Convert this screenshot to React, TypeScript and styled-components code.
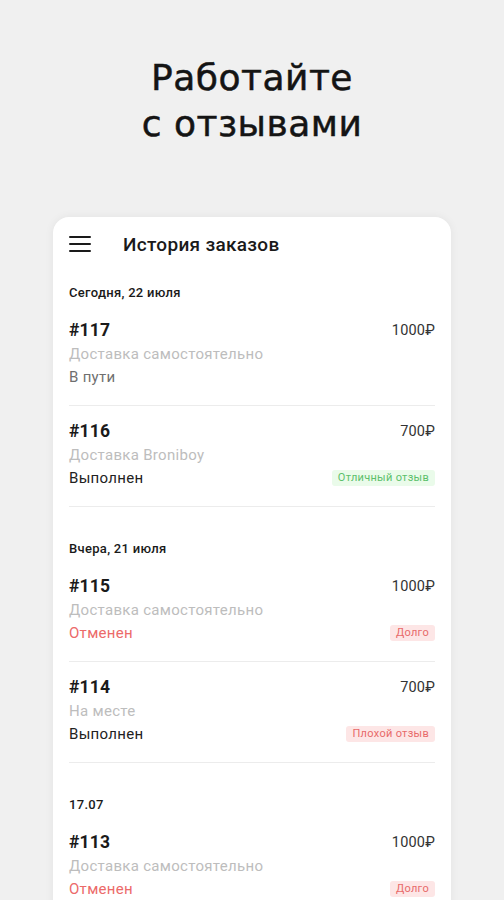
import React from 'react'
import styled, { createGlobalStyle } from 'styled-components'

const GlobalStyle = createGlobalStyle`
  html, body {
    margin: 0;
    padding: 0;
    background: #f0f0f0;
    font-family: Roboto, "Noto Sans", "Liberation Sans", sans-serif;
    color: #1a1a1a;
  }
`

const Page = styled.div`
  width: 504px;
  height: 900px;
  overflow: hidden;
  display: flex;
  flex-direction: column;
  align-items: center;
`

const Headline = styled.h1`
  margin: 55px 0 70px;
  font-family: "DejaVu Sans", "Open Sans", sans-serif;
  font-size: 36px;
  line-height: 46px;
  font-weight: 400;
  letter-spacing: 0.5px;
  -webkit-text-stroke: 0.5px #141414;
  text-align: center;
  color: #141414;
`

const Card = styled.div`
  width: 398px;
  flex: 1;
  background: #fff;
  border-radius: 16px 16px 0 0;
  box-shadow: 0 0 10px rgba(0, 0, 0, 0.06);
  padding: 0 16px;
  box-sizing: border-box;
`

const Header = styled.div`
  height: 54px;
  display: flex;
  align-items: center;
  gap: 32px;
`

const Burger = styled.div`
  width: 22px;
  display: flex;
  flex-direction: column;
  gap: 5px;
  span {
    display: block;
    height: 2px;
    background: #1a1a1a;
    border-radius: 1px;
  }
`

const Title = styled.div`
  font-size: 19px;
  font-weight: 500;
  letter-spacing: 0.3px;
  color: #1a1a1a;
`

const Section = styled.section`
  padding-top: 14px;
  & + & {
    padding-top: 34px;
  }
`

const DateLabel = styled.div`
  font-size: 13px;
  line-height: 16px;
  font-weight: 500;
  letter-spacing: 0.3px;
  color: #1a1a1a;
  margin-bottom: 17px;
`

const Order = styled.div`
  padding-bottom: 17px;
  border-bottom: 1px solid #ececec;
  & + & {
    padding-top: 13px;
  }
`

const Row = styled.div`
  display: flex;
  align-items: center;
  justify-content: space-between;
`

const Number = styled.div`
  font-size: 17.5px;
  line-height: 24px;
  font-weight: 700;
  letter-spacing: 0.2px;
  color: #1a1a1a;
`

const Price = styled.div`
  font-size: 14.5px;
  letter-spacing: 0.2px;
  color: #333;
`

const Delivery = styled.div`
  font-size: 15px;
  line-height: 24px;
  letter-spacing: 0.3px;
  color: #bdbdbd;
`

const Status = styled.div<{ $tone: 'muted' | 'done' | 'cancel' }>`
  font-size: 15px;
  line-height: 22px;
  letter-spacing: 0.3px;
  color: ${p => (p.$tone === 'cancel' ? '#ec6a6a' : p.$tone === 'muted' ? '#6f6f6f' : '#222')};
`

const Badge = styled.div<{ $good?: boolean }>`
  font-size: 11px;
  line-height: 16px;
  padding: 0 6px;
  letter-spacing: 0.3px;
  border-radius: 3px;
  color: ${p => (p.$good ? '#5cc06a' : '#e86a6a')};
  background: ${p => (p.$good ? '#eafbea' : '#fde6e6')};
`

type Tone = 'muted' | 'done' | 'cancel'

type OrderData = {
  id: number
  price: string
  delivery: string
  status: string
  tone: Tone
  badge?: string
  good?: boolean
}

const sections: { date: string; orders: OrderData[] }[] = [
  {
    date: 'Сегодня, 22 июля',
    orders: [
      { id: 117, price: '1000₽', delivery: 'Доставка самостоятельно', status: 'В пути', tone: 'muted' },
      { id: 116, price: '700₽', delivery: 'Доставка Broniboy', status: 'Выполнен', tone: 'done', badge: 'Отличный отзыв', good: true },
    ],
  },
  {
    date: 'Вчера, 21 июля',
    orders: [
      { id: 115, price: '1000₽', delivery: 'Доставка самостоятельно', status: 'Отменен', tone: 'cancel', badge: 'Долго' },
      { id: 114, price: '700₽', delivery: 'На месте', status: 'Выполнен', tone: 'done', badge: 'Плохой отзыв' },
    ],
  },
  {
    date: '17.07',
    orders: [
      { id: 113, price: '1000₽', delivery: 'Доставка самостоятельно', status: 'Отменен', tone: 'cancel', badge: 'Долго' },
    ],
  },
]

export default function App() {
  return (
    <Page>
      <GlobalStyle />
      <Headline>
        Работайте
        <br />с отзывами
      </Headline>
      <Card>
        <Header>
          <Burger>
            <span />
            <span />
            <span />
          </Burger>
          <Title>История заказов</Title>
        </Header>
        {sections.map(s => (
          <Section key={s.date}>
            <DateLabel>{s.date}</DateLabel>
            {s.orders.map(o => (
              <Order key={o.id}>
                <Row>
                  <Number>#{o.id}</Number>
                  <Price>{o.price}</Price>
                </Row>
                <Delivery>{o.delivery}</Delivery>
                <Row>
                  <Status $tone={o.tone}>{o.status}</Status>
                  {o.badge && <Badge $good={o.good}>{o.badge}</Badge>}
                </Row>
              </Order>
            ))}
          </Section>
        ))}
      </Card>
    </Page>
  )
}
